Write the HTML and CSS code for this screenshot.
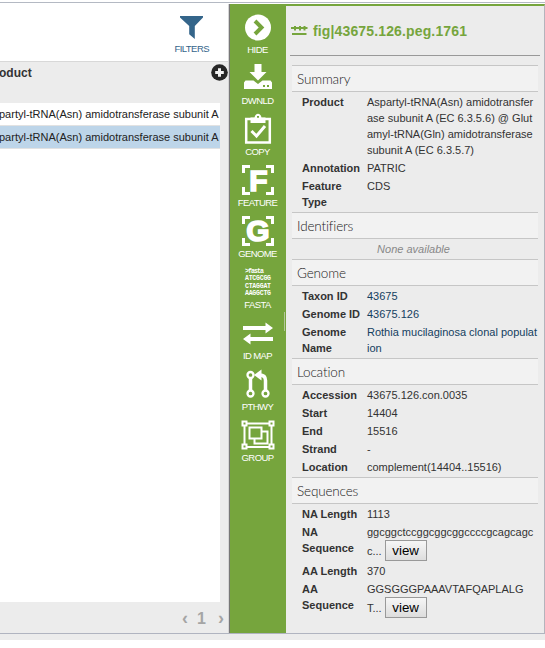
FILE: index.html
```html
<!DOCTYPE html>
<html lang="en">
<head>
<meta charset="utf-8">
<title>Feature details</title>
<link rel="stylesheet" href="styles.css">
</head>
<body>
<div class="app">
  <main class="list">
    <div class="toolbar">
      <div class="filters">
        <svg width="24" height="24" viewBox="0 0 24 24"><path fill="#34658a" d="M0 0h23v1.500L14.800 10v13L9.200 18.300V10L0 1.500z"/></svg>
        <span>FILTERS</span>
      </div>
    </div>
    <div class="grid-head">
      <span>oduct</span>
      <svg width="17" height="17" viewBox="0 0 17 17"><circle cx="8.500" cy="8.500" r="8.300" fill="#262626"/><path d="M8.500 4.200v8.600M4.200 8.500h8.600" stroke="#f2f2f2" stroke-width="3"/></svg>
    </div>
    <div class="grid-body">
      <div class="row">partyl-tRNA(Asn) amidotransferase subunit A</div>
      <div class="row selected">partyl-tRNA(Asn) amidotransferase subunit A</div>
    </div>
    <div class="pager"><span>‹</span><span class="page">1</span><span>›</span></div>
  </main>

  <nav class="actions">
    <div class="action"><svg width="34" height="32" viewBox="0 0 34 32"><circle cx="17" cy="16.500" r="13" fill="#fff"/><path d="M14 10l6.500 6.500L14 23" fill="none" stroke="#76a53d" stroke-width="4"/></svg><span>HIDE</span></div>
    <div class="action"><svg width="34" height="32" viewBox="0 0 34 32"><path fill="#fff" d="M13.500 2h7v8h5L17 18.500 8.500 10h5z"/><path fill="#fff" fill-rule="evenodd" d="M4.500 18.500h8L17 22l4.500-3.500h8l1.500 2V27H3v-6.500zM22 23v2h2v-2zM26 23v2h2v-2z"/></svg><span>DWNLD</span></div>
    <div class="action"><svg width="34" height="32" viewBox="0 0 34 32"><path d="M5.200 6h23.600v23.500H5.200z" fill="none" stroke="#fff" stroke-width="2.500"/><path fill="#fff" fill-rule="evenodd" d="M9.500 10V4.500h4C14 2 15.500.800 17 .800S20 2 20.500 4.500h4V10zM16 3v2h2V3z"/><path d="M10.500 18l5 5 8.500-10" fill="none" stroke="#fff" stroke-width="3"/></svg><span>COPY</span></div>
    <div class="action"><svg width="34" height="32" viewBox="0 0 34 32"><path d="M2.500 9V2.500H9M25 2.500h6.500V9M2.500 23v6.500H9M25 29.500h6.500V23" fill="none" stroke="#fff" stroke-width="3"/><text class="big" x="17.500" y="26.500" text-anchor="middle">F</text></svg><span>FEATURE</span></div>
    <div class="action"><svg width="34" height="32" viewBox="0 0 34 32"><path d="M2.500 9V2.500H9M25 2.500h6.500V9M2.500 23v6.500H9M25 29.500h6.500V23" fill="none" stroke="#fff" stroke-width="3"/><text class="big" x="17" y="26" text-anchor="middle">G</text></svg><span>GENOME</span></div>
    <div class="action"><svg width="34" height="32" viewBox="0 0 34 32"><g class="tiny"><text x="4" y="7" textLength="19">&gt;fasta</text><text x="4" y="14" textLength="26">ATCGCGG</text><text x="4" y="21.500" textLength="26">CTAGGAT</text><text x="4" y="28.500" textLength="26">AAGGCTG</text></g></svg><span>FASTA</span></div>
    <div class="action"><svg width="34" height="32" viewBox="0 0 34 32"><path fill="#fff" d="M2 9h22.500V5.500L32 11l-7.500 5.500V13H2zM32 24H9.500v3.500L2 22l7.500-5.500V20H32z"/></svg><span>ID MAP</span></div>
    <div class="action"><svg width="34" height="32" viewBox="0 0 34 32"><g fill="none" stroke="#fff"><g stroke-width="2.300"><circle cx="9.500" cy="7" r="3"/><circle cx="9.500" cy="25.500" r="3"/><circle cx="24.500" cy="25.500" r="3"/></g><path d="M9.500 10v12.500M24.500 22.500V12.500c0-4-2-5.500-6-5.500" stroke-width="3.500"/></g><path fill="#fff" d="M13 7l7.500-5.500v11z"/></svg><span>PTHWY</span></div>
    <div class="action"><svg width="34" height="32" viewBox="0 0 34 32"><g fill="none" stroke="#fff" stroke-width="2"><path d="M3.500 4.500h27v23.500h-27z"/><path d="M8.500 8.500h12v11h-12zM20.500 12.500h6v12h-13v-5"/></g><g fill="#76a53d" stroke="#fff" stroke-width="2"><path d="M1.500 2.500h4v4h-4zM28.500 2.500h4v4h-4zM1.500 25.500h4v4h-4zM28.500 25.500h4v4h-4z"/></g></svg><span>GROUP</span></div>
    <i class="splitter"></i>
  </nav>

  <aside class="details">
    <h1><svg width="17" height="12" viewBox="0 0 17 12"><path fill="#76a53d" d="M0 2h16.500v2H0zM1 8h14.500v2H1zM3 1h2v4.500H3zM8 1h2v4.500H8zM12.500 1h2v4.500h-2z"/></svg><span>fig|43675.126.peg.1761</span></h1>
    <section><h2>Summary</h2>
      <dl>
        <dt>Product</dt><dd>Aspartyl-tRNA(Asn) amidotransfer<br>ase subunit A (EC 6.3.5.6) @ Glut<br>amyl-tRNA(Gln) amidotransferase<br>subunit A (EC 6.3.5.7)</dd>
        <dt>Annotation</dt><dd>PATRIC</dd>
        <dt>Feature<br>Type</dt><dd>CDS</dd>
      </dl></section>
    <section><h2>Identifiers</h2><p class="none">None available</p></section>
    <section><h2>Genome</h2>
      <dl class="links">
        <dt>Taxon ID</dt><dd>43675</dd>
        <dt>Genome ID</dt><dd>43675.126</dd>
        <dt>Genome<br>Name</dt><dd>Rothia mucilaginosa clonal populat<br>ion</dd>
      </dl></section>
    <section><h2>Location</h2>
      <dl>
        <dt>Accession</dt><dd>43675.126.con.0035</dd>
        <dt>Start</dt><dd>14404</dd>
        <dt>End</dt><dd>15516</dd>
        <dt>Strand</dt><dd>-</dd>
        <dt>Location</dt><dd>complement(14404..15516)</dd>
      </dl></section>
    <section><h2>Sequences</h2>
      <dl>
        <dt>NA Length</dt><dd>1113</dd>
        <dt>NA<br>Sequence</dt><dd>ggcggctccggcggcggccccgcagcagc<div class="more"><span>c...</span><button>view</button></div></dd>
        <dt>AA Length</dt><dd>370</dd>
        <dt>AA<br>Sequence</dt><dd>GGSGGGPAAAVTAFQAPLALG<div class="more"><span>T...</span><button>view</button></div></dd>
      </dl></section>
  </aside>
</div>
<div class="footer"></div>
</body>
</html>
```
FILE: styles.css
```css
* { box-sizing: border-box; }
body { margin: 0; padding-top: 2px; width: 545px; height: 648px; overflow: hidden; background: #fff; font: 11px/16px "Liberation Sans", Arial, sans-serif; color: #333; }
svg { display: block; flex: none; }
.app { display: grid; grid-template-columns: 229px 57px 259px; height: 632px; border-top: 1px solid #b4b9c3; border-bottom: 1px solid #b0b4c0; padding-top: 1px; }
.footer { height: 6px; background: #ececec; }

.list { display: flex; flex-direction: column; min-width: 0; background: #ececec; border-right: 1px solid #d6d6d6; }
.toolbar { height: 57px; background: #fff; display: flex; justify-content: flex-end; padding: 12px 19px 0 0; }
.filters { display: flex; flex-direction: column; align-items: center; color: #34658a; }
.filters span { font-size: 9.5px; line-height: 12px; letter-spacing: -0.55px; margin-top: 3px; }
.grid-head { height: 42px; border-top: 1px solid #d8d8d8; display: flex; justify-content: space-between; padding-top: 2px; font-weight: bold; font-size: 12px; line-height: 18px; color: #333; }
.grid-head span { margin-left: -1px; }
.grid-head svg { margin-right: 0; }
.grid-body { width: 220px; height: 499px; background: #fff; overflow: hidden; }
.row { height: 23px; line-height: 22px; white-space: nowrap; border-bottom: 1px solid #e2e2e2; color: #222; text-indent: -1px; }
.selected { background: #bdd5e9; }
.pager { display: flex; justify-content: flex-end; gap: 9px; padding: 6px 4px 0 0; font-size: 18px; line-height: 20px; font-weight: bold; color: #a5a5a5; }
.pager .page { font-size: 16px; margin-right: 3px; line-height: 21px; }

.actions { position: relative; background: #76a53d; border-left: 1px solid #777; padding: 7px 1px 0 0; }
.action { height: 51px; display: flex; flex-direction: column; align-items: center; color: #fff; }
.action span { font-size: 9.5px; line-height: 12px; letter-spacing: -0.6px; margin-top: 1px; white-space: nowrap; }
.big { font: 900 30px "Liberation Sans", Arial, sans-serif; fill: #fff; stroke: #fff; stroke-width: 1.6px; }
.tiny { font: bold 6.500px "Liberation Mono", monospace; fill: #fff; }
.splitter { position: absolute; right: 1px; top: 308px; width: 1px; height: 19px; background: #b4c79b; }

.details { background: #ececec; border-top: 2px solid #76a53d; border-right: 1px solid #b4b4bc; padding: 0 4px; overflow: hidden; }
h1 { margin: 0 0 9px; height: 50px; border-bottom: 1px solid #999; display: flex; align-items: center; gap: 5px; padding-left: 1px; font-size: 14px; color: #76a53d; letter-spacing: 0.14px; }
section { margin: 0 2px; }
h2 { margin: 0; height: 27px; padding: 1px 0 0 5px; border: solid #c6c6c6; border-width: 1px 0; background: #f2f2f2; font: 300 13.500px/24px Lato, sans-serif; letter-spacing: -0.15px; color: #222; }
dl { margin: 0; padding: 1px 0; display: grid; grid-template-columns: 65px 171px; padding-left: 10px; }
dt, dd { margin: 0; padding: 1px 0; white-space: nowrap; }
dt { font-weight: bold; }
.links dd { color: #14405f; }
.none { margin: 0 3px 0 0; height: 20px; line-height: 20px; text-align: center; font-style: italic; color: #888; }
.more { height: 21px; display: flex; align-items: center; gap: 3px; }
button { width: 42px; height: 21px; padding: 0; border: 1px solid #999; background: linear-gradient(#f6f6f6, #ddd); font: 13.333px/17px "Liberation Sans", Arial, sans-serif; color: #000; }
```
